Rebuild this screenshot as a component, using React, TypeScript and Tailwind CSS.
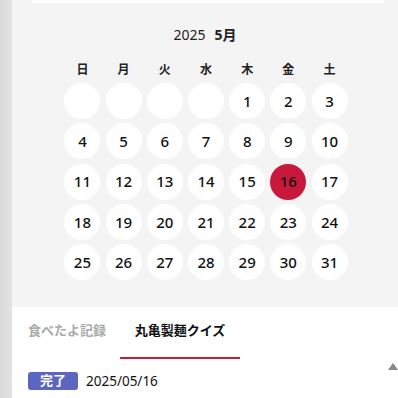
export default function App() {
  const weekdays = ["日", "月", "火", "水", "木", "金", "土"];
  const cells: (number | null)[] = [null, null, null, null];
  for (let d = 1; d <= 31; d++) cells.push(d);

  return (
    <div
      className="flex h-[398px] w-[398px] overflow-hidden"
      style={{ fontFamily: '"Noto Sans", "Noto Sans CJK JP", sans-serif' }}
    >
      <div className="w-[12px] shrink-0 bg-gradient-to-r from-[#d9d9d9] to-[#e3e3e3]" />
      <div className="flex flex-1 flex-col bg-[#f4f4f4]">
        <div className="ml-[20px] mr-[14px] h-[3px] bg-white" />

        <div className="mt-[21px] flex h-[20px] items-center justify-center gap-[9px] text-[14px] text-[#222]">
          <span>2025</span>
          <span className="font-bold">5月</span>
        </div>

        <div className="mx-auto mt-[18px] grid translate-x-[1px] grid-cols-[repeat(7,36px)] gap-x-[5.2px]">
          {weekdays.map((w) => (
            <div key={w} className="flex h-[16px] items-center justify-center text-[12px] font-bold text-[#222]">
              {w}
            </div>
          ))}
        </div>

        <div className="mx-auto mt-[5px] grid translate-x-[1px] grid-cols-[repeat(7,36px)] gap-x-[5.2px] gap-y-[4.25px]">
          {cells.map((d, i) => (
            <div
              key={i}
              className={
                d === 16
                  ? "flex h-[36px] w-[36px] items-center justify-center rounded-full bg-[#c8193c] text-[15px] font-medium text-[#111]"
                  : "flex h-[36px] w-[36px] items-center justify-center rounded-full bg-white text-[15px] font-medium text-[#111]"
              }
            >
              {d ?? ""}
            </div>
          ))}
        </div>

        <div className="relative mt-[27px] flex-1 bg-white">
          <div className="flex h-[52px] items-stretch pl-[16px]">
            <div className="flex w-[92px] items-center justify-start whitespace-nowrap pb-[4px] text-[13px] font-bold text-[#aaa]">
              食べたよ記録
            </div>
            <div className="flex w-[120px] flex-col items-center justify-center whitespace-nowrap border-b-[2px] border-[#c41e3a] pb-[2px] text-[13px] font-bold text-[#111]">
              丸亀製麺クイズ
            </div>
          </div>
          <div className="mt-[12px] flex items-center gap-[8px] pl-[16px]">
            <span className="flex h-[18px] w-[50px] items-center justify-center rounded-[3px] bg-[#5c65c0] text-[13px] font-bold text-white">
              完了
            </span>
            <span className="text-[13.5px] text-[#111]">2025/05/16</span>
          </div>
          <div className="absolute right-0 top-[56px] h-0 w-0 border-x-[5px] border-b-[7px] border-x-transparent border-b-[#888]" />
        </div>
      </div>
    </div>
  );
}
